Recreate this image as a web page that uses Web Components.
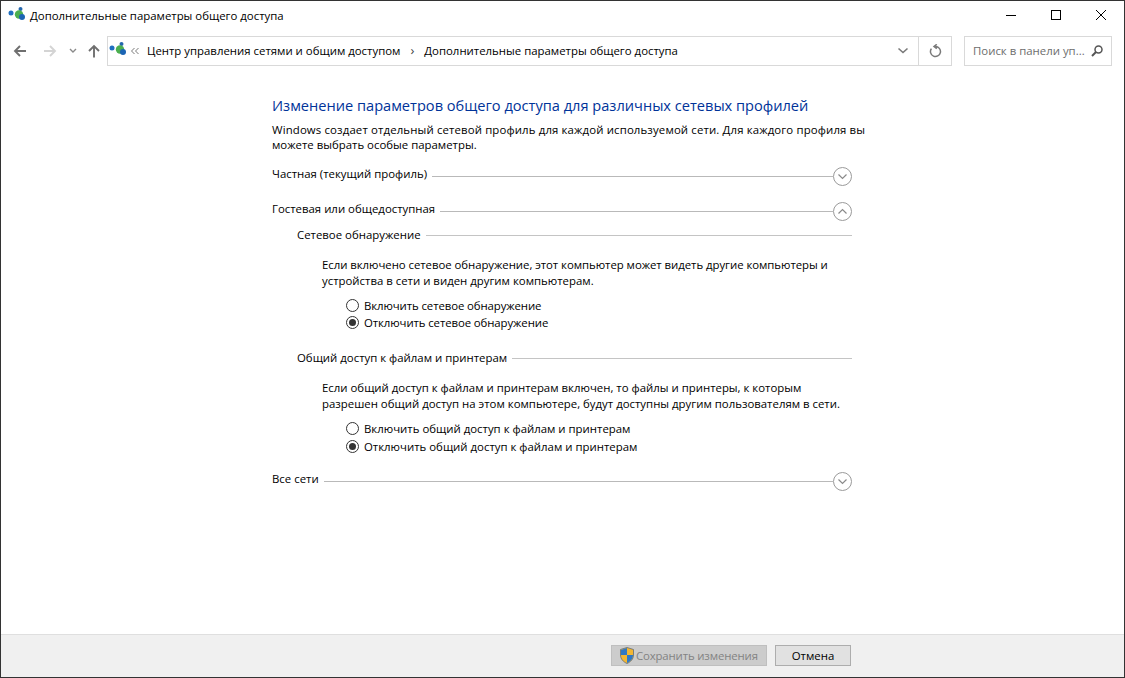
<!DOCTYPE html>
<html lang="ru">
<head>
<meta charset="utf-8">
<title>Дополнительные параметры общего доступа</title>
<style>
html,body{margin:0;padding:0;height:100%;overflow:hidden;background:#fff;}
body{font-family:"Open Sans","Noto Sans",sans-serif;font-size:11.4px;color:#000;white-space:nowrap;}
</style>
</head>
<body>
<net-window>
  <title-bar slot="title">Дополнительные параметры общего доступа</title-bar>
  <nav-bar slot="nav"></nav-bar>
  <settings-page slot="page">
    <page-intro>
      <span slot="heading">Изменение параметров общего доступа для различных сетевых профилей</span>
      <span style="letter-spacing:.135px">Windows создает отдельный сетевой профиль для каждой используемой сети. Для каждого профиля вы</span><br>можете выбрать особые параметры.
    </page-intro>
    <profile-row chevron="down" style="margin-top:16px">Частная (текущий профиль)</profile-row>
    <profile-row chevron="up" style="margin-top:15px">Гостевая или общедоступная</profile-row>
    <option-group title="Сетевое обнаружение" style="margin-top:4px">
      <span slot="text"><span style="letter-spacing:-.05px">Если включено сетевое обнаружение, этот компьютер может видеть другие компьютеры и</span><br>устройства в сети и виден другим компьютерам.</span>
      <radio-item style="letter-spacing:-.1px">Включить сетевое обнаружение</radio-item>
      <radio-item style="letter-spacing:-.1px" checked>Отключить сетевое обнаружение</radio-item>
    </option-group>
    <option-group title="Общий доступ к файлам и принтерам" style="margin-top:19px;--radio-gap:1px">
      <span slot="text">Если общий доступ к файлам и принтерам включен, то файлы и принтеры, к которым<br>разрешен общий доступ на этом компьютере, будут доступны другим пользователям в сети.</span>
      <radio-item>Включить общий доступ к файлам и принтерам</radio-item>
      <radio-item checked>Отключить общий доступ к файлам и принтерам</radio-item>
    </option-group>
    <profile-row chevron="down" style="margin-top:18px">Все сети</profile-row>
  </settings-page>
  <action-bar slot="footer"></action-bar>
</net-window>
<script>
const NET_ICON = `<svg width="18" height="18" viewBox="0 0 18 18" style="display:block">
  <circle cx="3" cy="6" r="2.5" fill="#1f6fc0"/>
  <circle cx="12.5" cy="2" r="2" fill="#2467ad"/>
  <circle cx="11" cy="7.5" r="4.2" fill="#4caf50"/>
  <circle cx="14" cy="10" r="3" fill="#1b64b4"/>
</svg>`

class NetWindow extends HTMLElement{
    constructor(){
        super()
        this.attachShadow({ mode: "open" })
        this.shadowRoot.innerHTML = `
        <style>
            :host{
                display:flex;
                flex-direction:column;
                width:1125px;
                height:678px;
                box-sizing:border-box;
                border:1px solid #333;
                background:#fff;
            }
            ::slotted([slot=page]){ flex:1; }
        </style>
        <slot name="title"></slot>
        <slot name="nav"></slot>
        <slot name="page"></slot>
        <slot name="footer"></slot>`
    }
}

class TitleBar extends HTMLElement{
    constructor(){
        super()
        this.attachShadow({ mode: "open" })
        this.shadowRoot.innerHTML = `
        <style>
            :host{
                display:flex;
                align-items:center;
                height:30px;
                padding:0 1px 0 7px;
                color:#000;
            }
            .icon{ width:18px; height:18px; margin-right:4px; }
            .text{ flex:1; padding-bottom:2px; }
            .btn{ width:45px; height:30px; box-sizing:border-box; padding-bottom:2px; display:flex; align-items:center; justify-content:center; }
        </style>
        <div class="icon">${NET_ICON}</div>
        <div class="text"><slot></slot></div>
        <div class="btn"><svg width="12" height="12"><path d="M1 6.5H11" stroke="#000"/></svg></div>
        <div class="btn"><svg width="12" height="12"><rect x="1.5" y="1.5" width="9" height="9" fill="none" stroke="#000"/></svg></div>
        <div class="btn"><svg width="12" height="12"><path d="M1 1L11 11M11 1L1 11" stroke="#000" fill="none"/></svg></div>`
    }
}

class NavBar extends HTMLElement{
    constructor(){
        super()
        this.attachShadow({ mode: "open" })
        this.shadowRoot.innerHTML = `
        <style>
            :host{
                display:flex;
                align-items:center;
                height:30px;
                margin-top:5px;
                padding-left:12px;
                box-sizing:border-box;
            }
            svg{ display:block; }
            .navs{ display:flex; align-items:center; width:94px; }
            .crumbs{
                display:flex;
                align-items:center;
                box-sizing:border-box;
                width:845px;
                height:30px;
                border:1px solid #d9d9d9;
                padding-left:1px;
            }
            .label{ padding-bottom:2px; }
            .sep{ color:#444; margin:0 10px; font-size:13px; line-height:13px; padding-bottom:2px; }
            .end{ margin-left:auto; display:flex; align-items:center; height:100%; }
            .drop{ width:30px; display:flex; justify-content:center; }
            .refresh{ width:32px; height:100%; border-left:1px solid #d9d9d9; display:flex; align-items:center; justify-content:center; }
            .search{
                display:flex;
                align-items:center;
                justify-content:space-between;
                box-sizing:border-box;
                width:148px;
                height:30px;
                margin-left:12px;
                border:1px solid #d9d9d9;
                padding:0 7px 0 8px;
                color:#6d6d6d;
            }
        </style>
        <div class="navs">
            <svg width="14" height="14" style="margin-right:16px"><path d="M13 7H2.5M7 2L2 7L7 12" fill="none" stroke="#6f6f6f" stroke-width="1.9"/></svg>
            <svg width="14" height="14" style="margin-right:12px"><path d="M1 7H11.5M7 2L12 7L7 12" fill="none" stroke="#d4d4d4" stroke-width="1.9"/></svg>
            <svg width="8" height="8" style="margin-right:10px"><path d="M1 2L4 5L7 2" fill="none" stroke="#8a8a8a" stroke-width="1.4"/></svg>
            <svg width="14" height="14"><path d="M7 13.5V2.5M2 7L7 2L12 7" fill="none" stroke="#6f6f6f" stroke-width="1.9"/></svg>
        </div>
        <div class="crumbs">
            <span>${NET_ICON}</span>
            <svg width="10" height="8" style="margin:0 7px 0 3px"><path d="M4.5 1L1.5 4L4.5 7M8.5 1L5.5 4L8.5 7" fill="none" stroke="#7a7a7a"/></svg>
            <span class="label">Центр управления сетями и общим доступом</span>
            <span class="sep">›</span>
            <span class="label">Дополнительные параметры общего доступа</span>
            <div class="end">
                <div class="drop"><svg width="12" height="8"><path d="M1.5 1.5L6 5.5L10.5 1.5" fill="none" stroke="#7a7a7a" stroke-width="1.6"/></svg></div>
                <div class="refresh"><svg width="15" height="15" viewBox="0 0 15 15"><path d="M3.4 4.6A5 5 0 1 0 7.5 2.5M8.8 .3L6 2.5L8.8 4.7" fill="none" stroke="#7a7a7a" stroke-width="1.5"/></svg></div>
            </div>
        </div>
        <div class="search">
            <span class="label">Поиск в панели уп...</span>
            <svg width="14" height="14"><circle cx="8.5" cy="5.5" r="3.5" fill="none" stroke="#555" stroke-width="1.5"/><path d="M6 8L2 12" stroke="#555" stroke-width="2"/></svg>
        </div>`
    }
}

class SettingsPage extends HTMLElement{
    constructor(){
        super()
        this.attachShadow({ mode: "open" })
        this.shadowRoot.innerHTML = `
        <style>
            :host{
                display:block;
                padding:29px 0 0 271px;
                width:580px;
            }
        </style>
        <slot></slot>`
    }
}

class PageIntro extends HTMLElement{
    constructor(){
        super()
        this.attachShadow({ mode: "open" })
        this.shadowRoot.innerHTML = `
        <style>
            :host{ display:block; line-height:15px; }
            .head{ font-size:14.6px; line-height:20px; color:#003399; margin-bottom:7px; }
        </style>
        <div class="head"><slot name="heading"></slot></div>
        <slot></slot>`
    }
}

class ProfileRow extends HTMLElement{
    constructor(){
        super()
        this.attachShadow({ mode: "open" })
        const up = this.getAttribute("chevron") === "up"
        const chev = up ? "M5.5 11.5L9.5 7.5L13.5 11.5" : "M5.5 7.5L9.5 11.5L13.5 7.5"
        this.shadowRoot.innerHTML = `
        <style>
            :host{ display:flex; align-items:flex-start; height:20px; line-height:16px; }
            span{ margin-top:-2px; }
            .line{ flex:1; height:1px; background:#b9b9b9; margin:8px 0 0 5px; }
            svg{ display:block; margin:-1px -1px 0 0; flex:none; }
        </style>
        <span><slot></slot></span>
        <div class="line"></div>
        <svg width="20" height="20"><circle cx="9.5" cy="9.5" r="9" fill="#fff" stroke="#9a9a9a"/><path d="${chev}" fill="none" stroke="#8a8a8a" stroke-width="1.2"/></svg>`
    }
}

class OptionGroup extends HTMLElement{
    constructor(){
        super()
        this.attachShadow({ mode: "open" })
        this.shadowRoot.innerHTML = `
        <style>
            :host{ display:block; padding-left:25px; }
            .title{ display:flex; align-items:center; height:16px; line-height:16px; }
            .line{ flex:1; height:1px; background:#c4c4c4; margin-left:5px; }
            .body{ padding:14px 0 0 25px; line-height:16px; }
            .radios{ display:flex; flex-direction:column; gap:var(--radio-gap,0); margin:8px 0 0 24px; }
        </style>
        <div class="title"><span>${this.getAttribute("title")}</span><div class="line"></div></div>
        <div class="body">
            <slot name="text"></slot>
            <div class="radios"><slot></slot></div>
        </div>`
    }
}

class RadioItem extends HTMLElement{
    constructor(){
        super()
        this.attachShadow({ mode: "open" })
        const dot = this.hasAttribute("checked") ? `<circle cx="6.5" cy="6.5" r="3.5" fill="#333"/>` : ""
        this.shadowRoot.innerHTML = `
        <style>
            :host{ display:flex; align-items:center; gap:5px; height:17px; }
            svg{ display:block; flex:none; }
        </style>
        <svg width="13" height="13"><circle cx="6.5" cy="6.5" r="6" fill="#fff" stroke="#333"/>${dot}</svg>
        <span><slot></slot></span>`
    }
}

class ActionBar extends HTMLElement{
    constructor(){
        super()
        this.attachShadow({ mode: "open" })
        this.shadowRoot.innerHTML = `
        <style>
            :host{
                display:flex;
                justify-content:flex-end;
                align-items:center;
                gap:8px;
                height:43px;
                box-sizing:border-box;
                padding:0 273px 1px 0;
                background:#f0f0f0;
                border-top:1px solid #dfdfdf;
            }
            .btn{
                display:flex;
                align-items:center;
                justify-content:center;
                box-sizing:border-box;
                height:21px;
                border:1px solid #adadad;
                background:#e1e1e1;
            }
            .save{ width:156px; justify-content:flex-start; padding-left:8px; background:#cccccc; border-color:#bfbfbf; color:#838383; gap:2px; letter-spacing:-.15px; }
            .cancel{ width:76px; }
        </style>
        <div class="btn save">
            <svg width="14" height="17" viewBox="0 0 14 17" style="flex:none">
              <path d="M7 .5L13.5 2.5V8C13.5 12 10.5 15 7 16.5C3.5 15 .5 12 .5 8V2.5Z" fill="#f2b632" stroke="#5f6b78" stroke-width=".8"/>
              <path d="M7 1L1 3V8H7ZM7 8V16C10 14.7 13 12 13 8Z" fill="#2f78c5"/>
            </svg>
            <span>Сохранить изменения</span>
        </div>
        <div class="btn cancel">Отмена</div>`
    }
}

customElements.define("net-window", NetWindow)
customElements.define("title-bar", TitleBar)
customElements.define("nav-bar", NavBar)
customElements.define("settings-page", SettingsPage)
customElements.define("page-intro", PageIntro)
customElements.define("profile-row", ProfileRow)
customElements.define("option-group", OptionGroup)
customElements.define("radio-item", RadioItem)
customElements.define("action-bar", ActionBar)
</script>
</body>
</html>
